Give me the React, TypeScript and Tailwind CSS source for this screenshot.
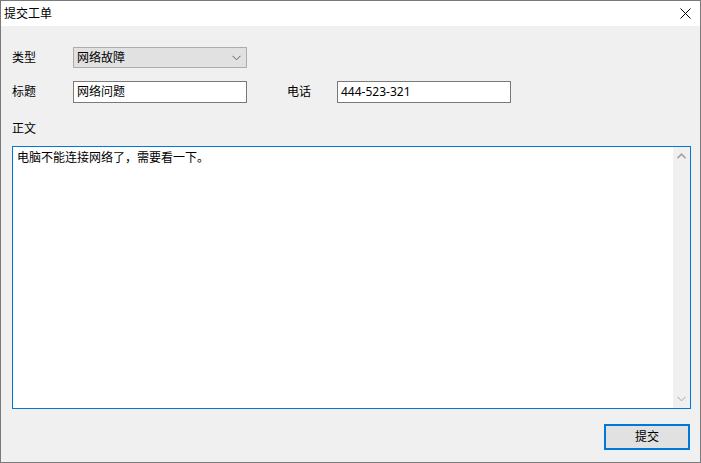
import React from "react"

const FONT = { fontFamily: "'Noto Sans', 'Noto Sans CJK SC', sans-serif" }

function ChevronDown({ className }: { className?: string }) {
  return (
    <svg width="9" height="6" viewBox="0 0 9 6" className={className}>
      <path d="M0.5 0.8 L4.5 4.8 L8.5 0.8" fill="none" stroke="currentColor" strokeWidth="1" />
    </svg>
  )
}

function ChevronUp({ className }: { className?: string }) {
  return (
    <svg width="9" height="6" viewBox="0 0 9 6" className={className}>
      <path d="M0.5 5.2 L4.5 1.2 L8.5 5.2" fill="none" stroke="currentColor" strokeWidth="1.6" />
    </svg>
  )
}

export default function App() {
  return (
    <div
      className="w-[701px] h-[463px] flex flex-col bg-[#f0f0f0] border border-[#7a7a7a] text-[12px] text-black overflow-hidden"
      style={FONT}
    >
      {/* Title bar */}
      <div className="h-[25px] shrink-0 bg-white flex items-center justify-between pl-[3px] pr-[9px]">
        <span className="leading-none">提交工单</span>
        <svg width="11" height="11" viewBox="0 0 11 11">
          <path d="M0.5 0.5 L10.5 10.5 M10.5 0.5 L0.5 10.5" stroke="#000" strokeWidth="1" />
        </svg>
      </div>

      {/* Client */}
      <div className="flex flex-col pt-[21px] pl-[11px]">
        <div className="flex items-center h-[21px]">
          <span className="w-[61px] leading-none">类型</span>
          <div className="w-[174px] h-[21px] bg-[#e1e1e1] border border-[#adadad] flex items-center justify-between pl-[3px] pr-[5px]">
            <span className="leading-none">网络故障</span>
            <ChevronDown className="text-[#606060]" />
          </div>
        </div>

        <div className="flex items-center h-[22px] mt-[13px]">
          <span className="w-[61px] leading-none">标题</span>
          <div className="w-[174px] h-[22px] bg-white border border-[#7a7a7a] flex items-center pl-[3px]">
            <span className="leading-none">网络问题</span>
          </div>
          <span className="w-[50px] ml-[40px] leading-none">电话</span>
          <div className="w-[174px] h-[22px] bg-white border border-[#7a7a7a] flex items-center pl-[3px]">
            <span className="leading-none">444-523-321</span>
          </div>
        </div>

        <div className="h-[16px] mt-[18px] flex items-center">
          <span className="leading-none">正文</span>
        </div>

        <div className="w-[679px] h-[263px] mt-[9px] bg-white border border-[#0078d7] flex">
          <div className="flex-1 pl-[4px] pt-[3px] leading-[16px]">电脑不能连接网络了，需要看一下。</div>
          <div className="w-[17px] bg-[#f0f0f0] flex flex-col items-center justify-between py-[6px]">
            <ChevronUp className="text-[#a3a3a3]" />
            <ChevronDown className="text-[#a3a3a3]" />
          </div>
        </div>

        <div className="w-[679px] flex justify-end mt-[15px]">
          <div className="w-[86px] h-[26px] bg-[#e1e1e1] border-2 border-[#0078d7] flex items-center justify-center mr-[1px]">
            <span className="leading-none">提交</span>
          </div>
        </div>
      </div>
    </div>
  )
}
